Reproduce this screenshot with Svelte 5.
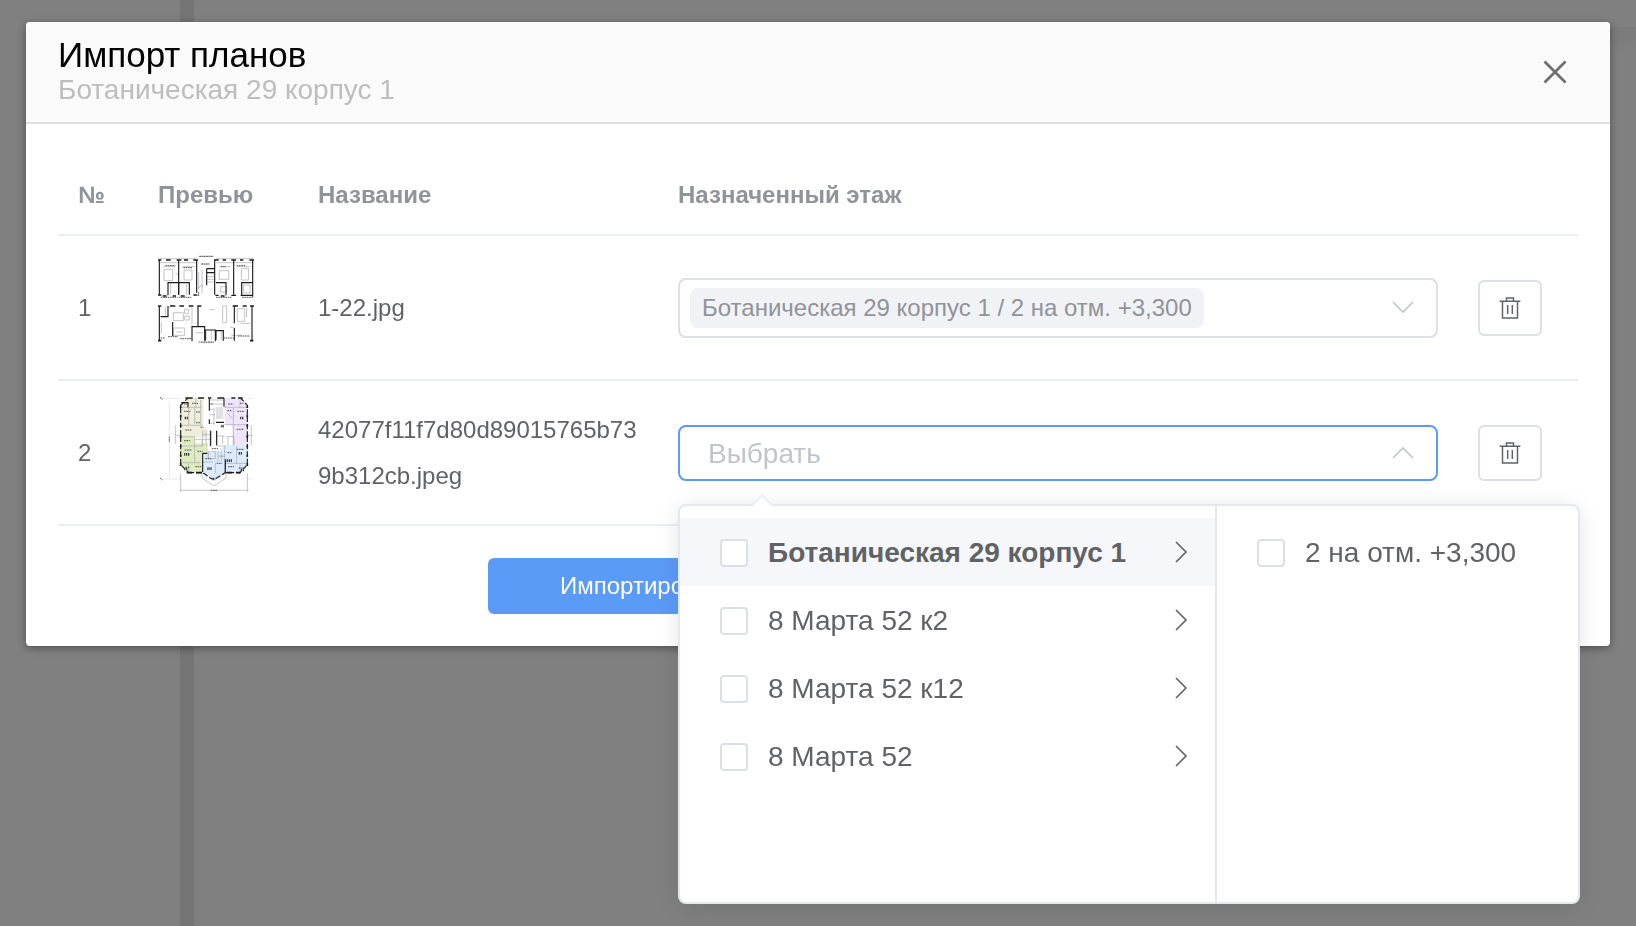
<script lang="ts">
	type Plan = { id: number; name: string; floor: string };

	const plans: Plan[] = [
		{ id: 1, name: '1-22.jpg', floor: 'Ботаническая 29 корпус 1 / 2 на отм. +3,300' },
		{ id: 2, name: '42077f11f7d80d89015765b739b312cb.jpeg', floor: '' }
	];

	const buildings = [
		{ name: 'Ботаническая 29 корпус 1', floors: ['2 на отм. +3,300'] },
		{ name: '8 Марта 52 к2', floors: [] },
		{ name: '8 Марта 52 к12', floors: [] },
		{ name: '8 Марта 52', floors: [] }
	];

	let active = $state(0);
</script>

{#snippet chevron(d: string)}
	<svg class="chevron" viewBox="0 0 28 28" aria-hidden="true"><path {d} /></svg>
{/snippet}

{#snippet blockPlan()}
	<svg class="preview" viewBox="54 36 288 333" role="img" aria-label="План этажа">
		<g class="thin">
			<path d="M176 49h44M58 56h110M228 56h112M58 68h110M228 68h112M68 80h38M128 80h36M240 80h32M290 80h42M182 72h28" />
			<path d="M72 88v34h26v-34zM132 90v30h24v-30zM238 92h28v26h-28zM304 86h22v34h-22zM92 130v34M140 132v32M242 140h18v16h-18zM310 135h20v24h-20z" />
			<path d="M176 96v50M186 90v70M176 146q10-18 14-4M200 110h22M200 118h22M200 126h22M106 100q12 0 10 14" />
			<path d="M100 218h30v24h-30zM134 208h12v12h-12zM134 228h14v12h-14zM100 264h34v22h-34zM76 200v28M156 200v56M248 198h12v50h-12zM292 206h22v38h-22z" />
			<path d="M208 209h16M110 276h18M274 286h32M166 278h24M198 272v28M214 272v28M244 272v28M320 202v30M300 250h30M182 308h38M64 246v34M270 262h14" />
		</g>
		<g class="wall">
			<path d="M58 60v104M116 60v104M170 60v98M224 60v104M281 60v104M338 60v110" />
			<path d="M84 166v-38h32v36M116 128h32v36M228 128h30v38M305 166v-38h33M200 86h24M200 86v50M200 98h24" />
			<path d="M58 198v104M62 230h22v-32M174 198v62h-18v44M156 260h38v42M283 198v52M283 264v38M336 198v104M196 302v-32h30v34M228 300v-28h22v30M98 246v42" />
			<path d="M54 60h10M78 60h14M110 60h14M132 60h12M160 60h14M222 60h14M248 60h10M274 60h14M300 60h10M328 60h14" stroke-width="5" />
			<path d="M54 165h10M68 168h12M98 168h10M122 168h12M160 165h12M226 166h10M242 168h12M274 166h14M302 166h36" stroke-width="4" />
			<path d="M54 198h10M90 198h16M118 198h14M146 198h14M172 198h12M278 198h16M308 198h12M330 198h12M54 302h10M330 302h10" stroke-width="5" />
		</g>
		<g class="mark">
			<path d="M76 77h30M130 83h28M242 80h16M290 77h26M184 72h24M178 49h42" />
			<path d="M62 172h50M116 172h38M176 168v-14M228 172h46M306 172h32M62 294h12M84 290h30M120 296h34M176 306h46M250 294h34M294 288h36" />
		</g>
	</svg>
{/snippet}

{#snippet towerPlan()}
	<svg class="preview" viewBox="54 51 288 333" role="img" aria-label="План этажа">
		<path fill="#eeeedb" d="M142 54h48v82l12 16v20h-82v-100z" />
		<path fill="#e0ebc0" d="M120 170h44v20h40v26l-16 10v52h-48l-20-24z" />
		<path fill="#efe5fa" d="M254 54h50l20 22v120h-46v-60h-24z" />
		<path fill="#dcebfc" d="M236 212l22-16h66v58l-22 24h-46l-32 22-34-22v-58z" />
		<g class="faint">
			<path d="M60 55h62M68 297h54M88 66v228M322 55h16M322 297h16" />
		</g>
		<g class="thin">
			<path d="M106 136v56M106 166h14M334 136v60M324 166h14" />
			<path d="M122 280v56M322 280v56M118 331h208M186 278v16l36 24 36-24v-16" />
			<path d="M120 136h68M146 82v54M164 82v50M122 82h64M168 54v28M182 60v74M122 170h42v28M122 198h66M164 198v50M122 248h60M146 250v28" />
			<path d="M254 82h70M280 84v50M262 100l16 16M300 54v28M254 134h70M280 134v62M258 170h24v26M254 198v80M290 198v54M258 250h64M300 254v24" />
			<path d="M188 152v46M198 152v46M210 152v46M186 164h26M186 178h26M166 178h20v20M230 152v46h28M230 168h24M248 168v24M264 172v24M206 214h20v22h-20zM234 214v32M244 214v30M234 228h20M188 246h32M226 248v30M204 214v20M240 230h14" />
			<path d="M208 60h42M208 72h42M222 86v48M226 84h24M228 90h22M228 96h22M228 102h22M228 108h22M228 114h22M208 88h16M208 104h16M208 130h16" />
		</g>
		<g class="wall">
			<path d="M122 166v-90l22-22M122 170v84l24 24M322 170v-94l-20-22M322 170v84l-22 24M146 278h42l26 18 10 2 32-20h44" stroke-dasharray="16 6" />
			<path d="M136 54h22M174 54h18M204 54h10M232 54h20M274 54h12M294 54h14M140 278h16M168 278h18M260 278h16M288 278h14" stroke-width="5" />
			<path d="M208 56v36M208 118v14M252 54v26M228 127h24M212 152v46M230 152v44M188 220v56M256 238v38M188 220h14M124 68h20v14" />
			<path d="M122 78v6M122 104v8M122 134v6M122 166v8M122 196v6M122 224v6M122 250v8M322 78v6M322 104v8M322 134v6M322 166v8M322 196v6M322 224v6M322 250v8" stroke-width="5" />
		</g>
		<g class="mark">
			<path d="M132 72h14M156 70h18M132 94h20M168 96h14M136 150h18M168 128h14M132 182h18M134 210h22M172 214h16M136 262h14M166 260h18" />
			<path d="M264 72h16M300 70h10M292 94h20M262 92h14M290 148h22M290 208h22M262 218h14M264 260h18M296 264h16M196 236h18M230 250h16M216 206h18M242 140h10" />
			<path d="M212 331h20M60 52l8 6M60 294l8 6M88 170v16M212 72h8M182 142h8" />
		</g>
		<g class="number">
			<path d="M134 114h10M132 223h16M300 114h12M296 220h12M202 266h14M260 242h18M244 138h8M218 297h8M132 267h10M302 270h10" />
		</g>
	</svg>
{/snippet}

<div class="page">
	<div class="page__sidebar"></div>
	<div class="page__divider"></div>
	<div class="page__main"></div>
</div>

<div class="overlay">
	<div class="dialog" role="dialog" aria-labelledby="dialog-title">
		<header class="dialog__header">
			<div>
				<h1 class="dialog__title" id="dialog-title">Импорт планов</h1>
				<p class="dialog__subtitle">Ботаническая 29 корпус 1</p>
			</div>
			<button class="dialog__close" type="button" aria-label="Закрыть">
				<svg viewBox="0 0 24 24" aria-hidden="true"><path d="M1.5 1.5l21 21M22.5 1.5l-21 21" /></svg>
			</button>
		</header>

		<div class="dialog__body">
			<table>
				<colgroup>
					<col class="col-number" />
					<col class="col-preview" />
					<col class="col-name" />
					<col />
					<col class="col-action" />
				</colgroup>
				<thead>
					<tr>
						<th>№</th>
						<th>Превью</th>
						<th>Название</th>
						<th>Назначенный этаж</th>
						<th></th>
					</tr>
				</thead>
				<tbody>
					{#each plans as plan (plan.id)}
						<tr>
							<td>{plan.id}</td>
							<td>
								{#if plan.id === 1}{@render blockPlan()}{:else}{@render towerPlan()}{/if}
							</td>
							<td class="name">{plan.name}</td>
							<td>
								{#if plan.floor}
									<button class="cascader cascader--filled" type="button" aria-haspopup="listbox">
										<span class="tag">{plan.floor}</span>
										{@render chevron('M4 8l10 10 10-10')}
									</button>
								{:else}
									<div class="cascader cascader--open">
										<input type="text" placeholder="Выбрать" aria-label="Назначенный этаж" readonly />
										{@render chevron('M4 19l10-10 10 10')}

										<div class="dropdown">
											<ul class="menu menu--buildings">
												{#each buildings as building, i}
													<li class="menu__item" class:menu__item--active={i === active}>
														<label><input type="checkbox" />{building.name}</label>
														<button type="button" aria-label="Открыть" onclick={() => (active = i)}>
															{@render chevron('M8 4l10 10-10 10')}
														</button>
													</li>
												{/each}
											</ul>
											<ul class="menu">
												{#each buildings[active].floors as floor}
													<li class="menu__item">
														<label><input type="checkbox" />{floor}</label>
													</li>
												{/each}
											</ul>
										</div>
									</div>
								{/if}
							</td>
							<td>
								<button class="remove" type="button" aria-label="Удалить">
									<svg viewBox="468 102 84 84" aria-hidden="true">
										<path d="M479 123.5h62M499.500 123v-9h21v9M487.500 124v50h45v-50M503 135v27M517 135v27" />
									</svg>
								</button>
							</td>
						</tr>
					{/each}
				</tbody>
			</table>

			<button class="submit" type="button">Импортировать</button>
		</div>
	</div>
</div>

<style>
	:global(body) {
		margin: 0;
		background: #808080;
		font-family: 'Liberation Sans', Arial, sans-serif;
		color: #606266;
	}

	.page,
	.page *,
	.overlay,
	.overlay * {
		box-sizing: border-box;
	}

	.page {
		position: fixed;
		inset: 0;
		display: flex;
		background: #808080;
	}

	.page__sidebar {
		width: 180px;
	}

	.page__divider {
		width: 14px;
		background: #757575;
	}

	.page__main {
		flex: 1;
		margin-top: 27px;
		background: linear-gradient(#7b7b7b, #808080 28px);
	}

	.overlay {
		position: relative;
		min-height: 100vh;
		padding: 22px 26px;
	}

	.dialog {
		background: #fff;
		border-radius: 4px;
		box-shadow: 0 2px 8px rgba(0, 0, 0, 0.4);
	}

	.dialog__header {
		display: flex;
		justify-content: space-between;
		align-items: center;
		padding: 15px 32px;
		background: #fafafa;
		border-bottom: 2px solid #e0e0e0;
		border-radius: 4px 4px 0 0;
	}

	.dialog__title {
		margin: 0;
		font-size: 35px;
		line-height: 36px;
		font-weight: 300;
		color: #000;
	}

	.dialog__subtitle {
		margin: 0;
		font-size: 28px;
		line-height: 34px;
		font-weight: 300;
		color: #bdbdbd;
	}

	.dialog__close {
		display: grid;
		place-items: center;
		width: 46px;
		height: 46px;
		padding: 0;
		border: 0;
		background: none;
	}

	.dialog__close svg {
		width: 24px;
		height: 24px;
		stroke: #707070;
		stroke-width: 2.8;
	}

	.dialog__body {
		padding: 32px;
	}

	table {
		width: 100%;
		table-layout: fixed;
		border-collapse: separate;
		border-spacing: 0;
		font-size: 24px;
	}

	.col-number {
		width: 80px;
	}

	.col-preview {
		width: 160px;
	}

	.col-name {
		width: 360px;
	}

	.col-action {
		width: 120px;
	}

	th {
		padding: 20px;
		line-height: 38px;
		text-align: left;
		color: #909399;
		border-bottom: 2px solid #ebeef5;
	}

	td {
		padding: 16px 20px;
		line-height: 46px;
		border-bottom: 2px solid #ebeef5;
	}

	.name {
		word-break: break-all;
	}

	.preview {
		display: block;
		width: 96px;
		height: 111px;
		fill: none;
	}

	.faint {
		stroke: #dcdcdc;
		stroke-width: 2;
	}

	.thin {
		stroke: #a8a8ac;
		stroke-width: 2;
	}

	.wall {
		stroke: #1c1c1c;
		stroke-width: 3.4;
	}

	.mark {
		stroke: #555;
		stroke-width: 3;
		stroke-dasharray: 5 2;
	}

	.number {
		stroke: #444;
		stroke-width: 8;
		stroke-dasharray: 4 2;
	}

	.cascader {
		position: relative;
		display: flex;
		align-items: center;
		justify-content: space-between;
		width: 100%;
		height: 56px;
		padding: 0 19px 0 28px;
		border: 2px solid #dcdfe6;
		border-radius: 8px;
		background: #fff;
		font: inherit;
	}

	.cascader--filled {
		height: 60px;
		padding-left: 10px;
	}

	.cascader--open {
		border-color: #5b9bf8;
	}

	.cascader > input {
		flex: 1;
		min-width: 0;
		padding: 2px 0 0;
		border: 0;
		outline: none;
		background: none;
		font: inherit;
		font-size: 28px;
	}

	.cascader > input::placeholder {
		color: #c0c4cc;
		opacity: 1;
	}

	.tag {
		padding: 0 12px;
		line-height: 40px;
		border-radius: 8px;
		background: #f0f2f5;
		color: #909399;
	}

	.chevron {
		display: block;
		width: 28px;
		height: 28px;
		fill: none;
		stroke: #c0c4cc;
		stroke-width: 1.6;
	}

	.dropdown {
		position: absolute;
		top: 77px;
		left: -2px;
		z-index: 1;
		display: flex;
		height: 400px;
		border: 2px solid #e4e7ed;
		border-radius: 8px;
		background: #fff;
		box-shadow: 0 4px 24px rgba(0, 0, 0, 0.1);
	}

	.dropdown::before {
		content: '';
		position: absolute;
		top: -9px;
		left: 74px;
		width: 14px;
		height: 14px;
		border: solid #ebeef5;
		border-width: 2px 0 0 2px;
		background: linear-gradient(135deg, #fff 50%, transparent 50%);
		transform: rotate(45deg);
	}

	.menu {
		width: 361px;
		margin: 0;
		padding: 12px 0;
		list-style: none;
	}

	.menu--buildings {
		width: 537px;
		border-right: 2px solid #e4e7ed;
	}

	.menu__item {
		display: flex;
		justify-content: space-between;
		align-items: center;
		height: 68px;
		padding: 0 19px 0 40px;
		font-size: 28px;
	}

	.menu__item--active {
		background: #f5f7fa;
		font-weight: 700;
	}

	.menu__item label {
		display: flex;
		align-items: center;
		gap: 20px;
		padding-top: 2px;
		white-space: nowrap;
	}

	.menu__item input {
		appearance: none;
		width: 28px;
		height: 28px;
		margin: 0;
		border: 2px solid #dcdfe6;
		border-radius: 4px;
		background: #fff;
	}

	.menu__item button {
		padding: 0;
		border: 0;
		background: none;
	}

	.menu__item .chevron {
		stroke: #606266;
	}

	.remove {
		display: grid;
		place-items: center;
		width: 64px;
		height: 56px;
		padding: 0;
		border: 2px solid #dcdfe6;
		border-radius: 6px;
		background: #fff;
	}

	.remove svg {
		width: 28px;
		height: 28px;
		fill: none;
		stroke: #606266;
		stroke-width: 4.4;
	}

	.submit {
		display: block;
		width: 660px;
		max-width: 100%;
		height: 56px;
		margin: 32px auto 0;
		padding: 0 72px;
		border: 0;
		border-radius: 6px;
		background: #5b9bf8;
		color: #fff;
		font: inherit;
		font-size: 24px;
		text-align: left;
	}
</style>
